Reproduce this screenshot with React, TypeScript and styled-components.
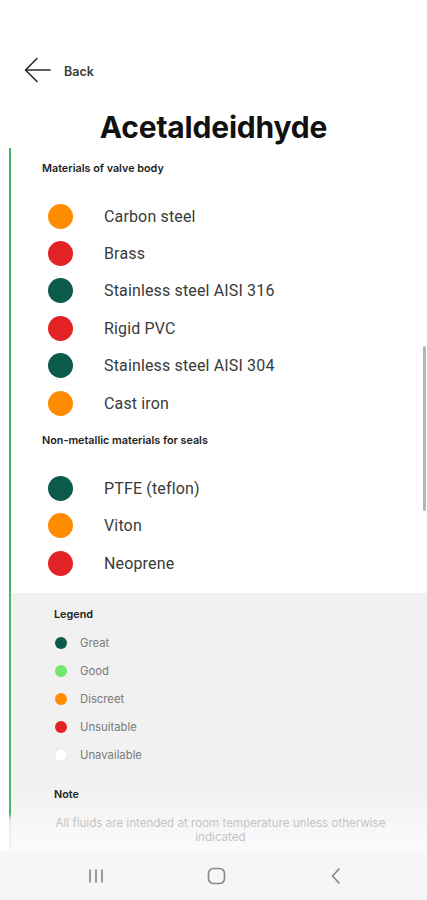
import React from "react";
import styled, { createGlobalStyle } from "styled-components";

const Global = createGlobalStyle`
  html, body { margin: 0; padding: 0; background: #fff; }
  body { font-family: Roboto, "Noto Sans", sans-serif; }
  * { box-sizing: border-box; }
`;

const COLORS = {
  great: "#0c5a4a",
  good: "#6fe86b",
  discreet: "#ff8b00",
  unsuitable: "#e32226",
  unavailable: "#ffffff",
};

type Rating = keyof typeof COLORS;

const Screen = styled.div`
  width: 427px;
  height: 900px;
  display: flex;
  flex-direction: column;
  overflow: hidden;
  position: relative;
  background: #fff;
`;

const TopBar = styled.div`
  height: 55px;
  flex: none;
`;

const BackRow = styled.div`
  height: 30px;
  display: flex;
  align-items: center;
  padding-left: 24px;
  gap: 13px;
  flex: none;
`;

const BackLabel = styled.span`
  font-family: Inter, "Noto Sans", sans-serif;
  font-size: 12.5px;
  font-weight: 600;
  color: #3a3a3a;
  margin-top: 2px;
`;

const Title = styled.h1`
  margin: 22px 0 0;
  height: 41px;
  line-height: 41px;
  text-align: center;
  font-family: Inter, "Noto Sans", sans-serif;
  font-weight: 700;
  font-size: 30px;
  letter-spacing: -0.2px;
  color: #111;
  flex: none;
`;

const Body = styled.div`
  flex: 1;
  min-height: 0;
  margin-left: 9px;
  border-left: 2px solid #44b867;
  border-image: linear-gradient(to bottom, #44b867 0%, #44b867 94.5%, #ececec 95.5%, #f4f4f4 100%) 1;
  display: flex;
  flex-direction: column;
  overflow: hidden;
  position: relative;
`;

const SectionLabel = styled.div<{ $top: number; $gap: number }>`
  margin-top: ${(p) => p.$top}px;
  margin-bottom: ${(p) => p.$gap}px;
  padding-left: 31px;
  height: 14px;
  line-height: 14px;
  font-family: Inter, "Noto Sans", sans-serif;
  font-size: 10.8px;
  font-weight: 600;
  color: #1e1e1e;
`;

const List = styled.div`
  display: flex;
  flex-direction: column;
  margin-right: 30px;
`;

const Row = styled.div`
  height: 37.4px;
  display: flex;
  align-items: center;
  padding-left: 37px;
  gap: 31px;
  border-bottom: 1px solid #fbfbfb;
`;

const Dot = styled.span<{ $color: string; $size: number }>`
  width: ${(p) => p.$size}px;
  height: ${(p) => p.$size}px;
  border-radius: 50%;
  background: ${(p) => p.$color};
  flex: none;
  box-shadow: ${(p) => (p.$color === "#ffffff" ? "0 0 0 1px #e4e4e4" : "none")};
`;

const RowText = styled.span`
  font-size: 16px;
  color: #3a3a3a;
  letter-spacing: 0.15px;
`;

const Panel = styled.div`
  margin-top: 10px;
  flex: 1;
  background: linear-gradient(to bottom, #f1f1f1 0%, #f1f1f1 75%, #fbfbfb 100%);
  padding: 15px 40px 0 43px;
  display: flex;
  flex-direction: column;
`;

const PanelTitle = styled.div<{ $top?: number }>`
  height: 14px;
  line-height: 14px;
  margin-top: ${(p) => p.$top ?? 0}px;
  font-family: Inter, "Noto Sans", sans-serif;
  font-size: 10.8px;
  font-weight: 600;
  color: #222;
`;

const LegendList = styled.div`
  margin-top: 7px;
  display: flex;
  flex-direction: column;
`;

const LegendRow = styled.div`
  height: 28px;
  display: flex;
  align-items: center;
  padding-left: 1px;
  gap: 13px;
`;

const LegendText = styled.span`
  font-family: Inter, "Noto Sans", sans-serif;
  font-size: 11.3px;
  color: #7a7a7a;
`;

const NoteText = styled.p`
  margin: 14px -10px 0 -10px;
  text-align: center;
  font-family: Inter, "Noto Sans", sans-serif;
  font-size: 11.6px;
  line-height: 14px;
  color: #c4c4c4;
`;

const Scrollbar = styled.div`
  position: absolute;
  right: 1px;
  top: 346px;
  width: 3px;
  height: 165px;
  border-radius: 2px;
  background: #b4b4b4;
`;

const NavBar = styled.div`
  height: 49px;
  flex: none;
  background: #f6f6f6;
  display: grid;
  grid-template-columns: repeat(3, 120px);
  align-items: center;
  justify-items: center;
  padding-left: 36px;
`;

const BackArrow = () => (
  <svg width="27" height="26" viewBox="0 0 27 26" fill="none" stroke="#2a2a2a" strokeWidth="1.6" strokeLinecap="round" strokeLinejoin="round">
    <path d="M26 13H2" />
    <path d="M13 1.5L1.5 13L13 24.5" />
  </svg>
);

const RecentsIcon = () => (
  <svg width="18" height="16" viewBox="0 0 18 16" fill="none" stroke="#8a8a8a" strokeWidth="1.7" strokeLinecap="round">
    <path d="M3 2v12M9 2v12M15 2v12" />
  </svg>
);

const HomeIcon = () => (
  <svg width="19" height="18" viewBox="0 0 19 18" fill="none" stroke="#8a8a8a" strokeWidth="1.7">
    <rect x="1.5" y="1.5" width="16" height="15" rx="5" />
  </svg>
);

const NavBackIcon = () => (
  <svg width="12" height="18" viewBox="0 0 12 18" fill="none" stroke="#8a8a8a" strokeWidth="1.7" strokeLinecap="round" strokeLinejoin="round">
    <path d="M9 2L2.5 9L9 16" />
  </svg>
);

const valveBody: [string, Rating][] = [
  ["Carbon steel", "discreet"],
  ["Brass", "unsuitable"],
  ["Stainless steel AISI 316", "great"],
  ["Rigid PVC", "unsuitable"],
  ["Stainless steel AISI 304", "great"],
  ["Cast iron", "discreet"],
];

const seals: [string, Rating][] = [
  ["PTFE (teflon)", "great"],
  ["Viton", "discreet"],
  ["Neoprene", "unsuitable"],
];

const legend: [string, Rating][] = [
  ["Great", "great"],
  ["Good", "good"],
  ["Discreet", "discreet"],
  ["Unsuitable", "unsuitable"],
  ["Unavailable", "unavailable"],
];

export default function App() {
  return (
    <>
      <Global />
      <Screen>
        <TopBar />
        <BackRow>
          <BackArrow />
          <BackLabel>Back</BackLabel>
        </BackRow>
        <Title>Acetaldeidhyde</Title>
        <Body>
          <SectionLabel $top={14} $gap={22}>Materials of valve body</SectionLabel>
          <List>
            {valveBody.map(([name, r]) => (
              <Row key={name}>
                <Dot $color={COLORS[r]} $size={25} />
                <RowText>{name}</RowText>
              </Row>
            ))}
          </List>
          <SectionLabel $top={12} $gap={22}>Non-metallic materials for seals</SectionLabel>
          <List>
            {seals.map(([name, r]) => (
              <Row key={name}>
                <Dot $color={COLORS[r]} $size={25} />
                <RowText>{name}</RowText>
              </Row>
            ))}
          </List>
          <Panel>
            <PanelTitle>Legend</PanelTitle>
            <LegendList>
              {legend.map(([name, r]) => (
                <LegendRow key={name}>
                  <Dot $color={COLORS[r]} $size={12} />
                  <LegendText>{name}</LegendText>
                </LegendRow>
              ))}
            </LegendList>
            <PanelTitle $top={19}>Note</PanelTitle>
            <NoteText>
              All fluids are intended at room temperature unless otherwise
              <br />
              indicated
            </NoteText>
          </Panel>
        </Body>
        <Scrollbar />
        <NavBar>
          <RecentsIcon />
          <HomeIcon />
          <NavBackIcon />
        </NavBar>
      </Screen>
    </>
  );
}
